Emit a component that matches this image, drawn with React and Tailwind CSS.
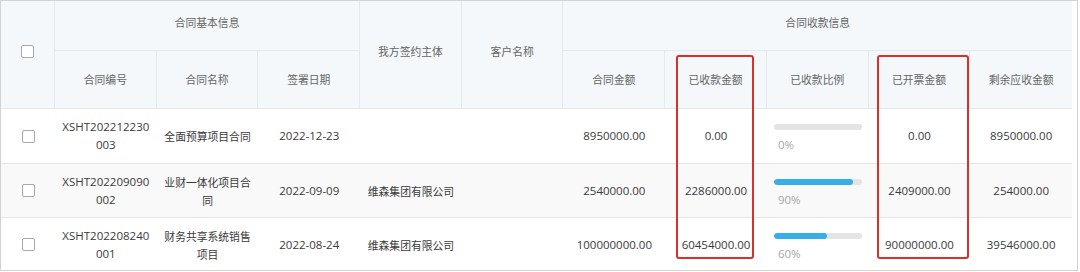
import React from "react";

const latin = { fontFamily: '"Open Sans","Noto Sans CJK SC",sans-serif' };
const cjk = { fontFamily: '"Noto Sans CJK SC","Open Sans",sans-serif' };

function Box() {
  return <div className="w-[13px] h-[13px] rounded-[2px] border border-[#a8a8a8] bg-white" />;
}

const rows = [
  { no: "XSHT202212230003", name: "全面预算项目合同", date: "2022-12-23", party: "", amt: "8950000.00", recv: "0.00", pct: 0, inv: "0.00", rest: "8950000.00", h: "h-[55px]", bg: "bg-white" },
  { no: "XSHT202209090002", name: "业财一体化项目合同", date: "2022-09-09", party: "维森集团有限公司", amt: "2540000.00", recv: "2286000.00", pct: 90, inv: "2409000.00", rest: "254000.00", h: "h-[54px]", bg: "bg-[#f9f9f9]" },
  { no: "XSHT202208240001", name: "财务共享系统销售项目", date: "2022-08-24", party: "维森集团有限公司", amt: "100000000.00", recv: "60454000.00", pct: 60, inv: "90000000.00", rest: "39546000.00", h: "h-[53px]", bg: "bg-white" },
];

const hc = "flex items-center justify-center border-r border-b border-[#e4e9ee] text-[#666] text-[10.8px]";
const cell = "flex items-center justify-center text-center px-[7px] text-[#3a3a3a] leading-[18px]";

export default function App() {
  return (
    <div className="w-[1078px] h-[271px] border border-[#d2d2d2] bg-white overflow-hidden">
      <div className="relative w-[1071px]">
        <div className="grid grid-cols-[54px_repeat(10,minmax(0,1fr))] grid-rows-[50px_58px] bg-[#f5f8fb]" style={cjk}>
          <div className={`${hc} row-span-2 pb-[7px]`}><Box /></div>
          <div className={`${hc} col-span-3 pb-[6px]`}>合同基本信息</div>
          <div className={`${hc} row-span-2 pb-[7px]`}>我方签约主体</div>
          <div className={`${hc} row-span-2 pb-[7px]`}>客户名称</div>
          <div className={`${hc} col-span-5 pb-[6px] border-r-0`}>合同收款信息</div>
          <div className={hc}>合同编号</div>
          <div className={hc}>合同名称</div>
          <div className={hc}>签署日期</div>
          <div className={hc}>合同金额</div>
          <div className={hc}>已收款金额</div>
          <div className={hc}>已收款比例</div>
          <div className={hc}>已开票金额</div>
          <div className={`${hc} border-r-0`}>剩余应收金额</div>
        </div>
        {rows.map((r, i) => (
          <div key={i} className={`grid grid-cols-[54px_repeat(10,minmax(0,1fr))] ${r.h} ${r.bg} ${i < 2 ? "border-b border-[#e6e6e6]" : ""}`}>
            <div className="flex items-center justify-center"><Box /></div>
            <div className={`${cell} text-[11.5px] break-all`} style={latin}>{r.no}</div>
            <div className={`${cell} text-[10.8px]`} style={cjk}>{r.name}</div>
            <div className={`${cell} text-[11.5px]`} style={latin}>{r.date}</div>
            <div className={`${cell} text-[10.8px] whitespace-nowrap px-0`} style={cjk}>{r.party}</div>
            <div className={cell}></div>
            <div className={`${cell} text-[11.5px]`} style={latin}>{r.amt}</div>
            <div className={`${cell} text-[11.5px]`} style={latin}>{r.recv}</div>
            <div className="flex flex-col justify-center px-[7px] pt-[5px]">
              <div className="h-[6px] w-full rounded-full bg-[#e4e4e4] overflow-hidden">
                <div className="h-full rounded-full bg-[#36aee8]" style={{ width: `${r.pct}%` }} />
              </div>
              <div className="pl-[4px] mt-[7px] text-[11.5px] leading-[16px] text-[#a8a8a8]" style={latin}>{r.pct}%</div>
            </div>
            <div className={`${cell} text-[11.5px]`} style={latin}>{r.inv}</div>
            <div className={`${cell} text-[11.5px]`} style={latin}>{r.rest}</div>
          </div>
        ))}
        <div className="absolute left-[675px] top-[54px] w-[78px] h-[204px] border-[2.5px] border-[#d9302a] rounded-[3px]" />
        <div className="absolute left-[876px] top-[54px] w-[92px] h-[204px] border-[2.5px] border-[#d9302a] rounded-[3px]" />
      </div>
    </div>
  );
}
